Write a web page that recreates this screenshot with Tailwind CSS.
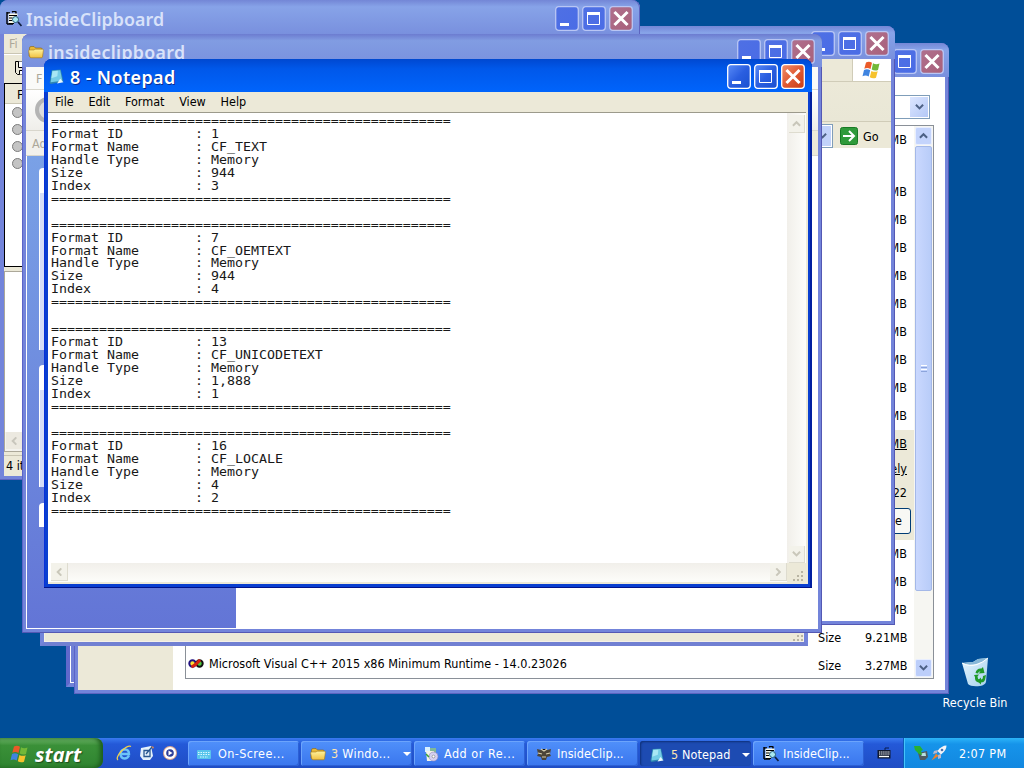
<!DOCTYPE html>
<html lang="en">
<head>
  <meta charset="UTF-8">
  <meta name="viewport" content="width=device-width, initial-scale=1.0">
  <title>8 - Notepad</title>
  <script src="https://cdn.jsdelivr.net/npm/@tailwindcss/browser@4"></script>
</head>
<body class="w-[1024px] h-[768px] overflow-hidden bg-[#004e98] text-black text-[12.5px] leading-[14px] font-['DejaVu_Sans_Condensed','Noto_Sans',sans-serif]">

  <!-- shared icons -->
  <svg class="absolute w-0 h-0">
    <defs>
      <linearGradient id="blueA" x1="0" y1="0" x2="1" y2="1"><stop offset="0" stop-color="#5a8cf8"/><stop offset=".5" stop-color="#2a5ee0"/><stop offset="1" stop-color="#1a50d0"/></linearGradient>
      <linearGradient id="redA" x1="0" y1="0" x2="1" y2="1"><stop offset="0" stop-color="#f0906c"/><stop offset=".5" stop-color="#e05a34"/><stop offset="1" stop-color="#c83c14"/></linearGradient>
      <linearGradient id="blueI" x1="0" y1="0" x2="1" y2="1"><stop offset="0" stop-color="#4f70e4"/><stop offset="1" stop-color="#4a6ce6"/></linearGradient>
      <linearGradient id="redI" x1="0" y1="0" x2="1" y2="1"><stop offset="0" stop-color="#b0708e"/><stop offset="1" stop-color="#a8607a"/></linearGradient>
      <linearGradient id="fold" x1="0" y1="0" x2="0" y2="1"><stop offset="0" stop-color="#fff3a0"/><stop offset="1" stop-color="#f0c040"/></linearGradient>
      <linearGradient id="bin" x1="0" y1="0" x2="1" y2="1"><stop offset="0" stop-color="#e8f6ff"/><stop offset="1" stop-color="#a4d0ec"/></linearGradient>
    </defs>
    <symbol id="min" viewBox="0 0 24 25">
      <rect x=".7" y=".7" width="22.6" height="23.6" rx="3" stroke-width="1.3"/>
      <rect x="5" y="17" width="9" height="3" fill="#fff" stroke="none"/>
    </symbol>
    <symbol id="max" viewBox="0 0 24 25">
      <rect x=".7" y=".7" width="22.6" height="23.6" rx="3" stroke-width="1.3"/>
      <path d="M5.500 7v11.500h12V7z" fill="none" stroke="#fff" stroke-width="1"/>
      <path d="M5 7.500h13" stroke="#fff" stroke-width="3"/>
    </symbol>
    <symbol id="close" viewBox="0 0 24 25">
      <rect x=".7" y=".7" width="22.6" height="23.6" rx="3" stroke-width="1.3"/>
      <path d="M6.500 7l11 11M17.500 7l-11 11" stroke="#fff" stroke-width="3" stroke-linecap="square"/>
    </symbol>
    <symbol id="folder" viewBox="0 0 16 16">
      <path d="M1.500 4q0-1.500 1.500-1.500h3l1.500 1.500H13q1 0 1 1V13H2.500L1 12z" fill="#e8b838" stroke="#8a6410" stroke-width=".6"/>
      <path d="M.6 7q0-1 1-1H6l1-.8h7.600q1 0 .8 1L14.500 13q-.2.8-1 .8H3q-1 0-1.200-1z" fill="url(#fold)" stroke="#a87c1c" stroke-width=".6"/>
    </symbol>
    <symbol id="notes" viewBox="0 0 16 16">
      <path d="M3.500 2l8.500-.5 2.500 11.500-12 2-1-1z" fill="#2f86b0"/>
      <path d="M4 2.500l7.500-.5 2 10-11 1.500z" fill="#74cce6"/>
      <path d="M4.300 3l5-.3-.5 5-5.600 2z" fill="#a8e6f4"/>
      <path d="M11.500 10l3 3.500-6 1z" fill="#e8f8ff"/>
    </symbol>
    <symbol id="clip" viewBox="0 0 16 16">
      <path d="M1 1v12M1 2h3M6 1l2-1 2 1v2M1 13h6" stroke="#000" stroke-width="1.400" fill="none"/>
      <path d="M2.500 2.500h9v3h-2L8 12H2.500z" fill="#f8f8e8"/>
      <path d="M3 4.500h8M3 7h3.500M3 9.500h3M3 12.500h5" stroke="#000" stroke-width="1"/>
      <circle cx="9.500" cy="8.500" r="3" fill="#a8e8f0" stroke="#245a78"/>
      <path d="M12 11l3.500 4" stroke="#102040" stroke-width="1.800"/>
    </symbol>
    <symbol id="flag" viewBox="0 0 20 20">
      <path d="M4 2.500q3-1.800 6 .2L8.500 9q-3-2-6.200-.3z" fill="#ea5a28"/>
      <path d="M11 3.300q3 1.800 6.500.3L16 10q-3 1.300-6.300-.4z" fill="#72b838"/>
      <path d="M2 10q3-1.700 6.200.2L6.700 16.500q-3-1.800-6.200-.3z" fill="#3f84e0"/>
      <path d="M9.400 10.900q3 1.700 6.300.3L14 17.700q-3 1.400-6.200-.4z" fill="#f6c22c"/>
    </symbol>
    <symbol id="down" viewBox="0 0 10 8"><path d="M1 1.500l4 4 4-4" fill="none" stroke-width="2.200"/></symbol>
    <symbol id="up" viewBox="0 0 10 8"><path d="M1 6l4-4 4 4" fill="none" stroke-width="2.200"/></symbol>
    <symbol id="grip" viewBox="0 0 12 12">
      <path d="M9 1h2v2h-2zM5 5h2v2h-2zM9 5h2v2h-2zM1 9h2v2h-2zM5 9h2v2h-2zM9 9h2v2h-2z" fill="#b8b4a2"/>
    </symbol>
  </svg>

  <!-- recycle bin -->
  <div class="absolute left-[935px] top-[656px] w-[80px] flex flex-col items-center text-white">
    <svg class="w-8 h-8" viewBox="0 0 32 32">
      <path d="M3 7l11-1 5-3 10-1-2 24q-1 3-6 4-9 1-12-2z" fill="url(#bin)"/>
      <path d="M3 7q6 3 14 1 7-2 12-6l-10 1-5 3z" fill="#88b8d8"/>
      <path d="M3 7q7 4 15 1.500 6-2 11-6.500" fill="none" stroke="#fff" stroke-width="1"/>
      <path d="M16.500 17q1-5 6-4.500l1.500-1.500 1.500 6-6 .5 2-2q-2-.5-2.500 2zM27 19l-1 5q-1 2.500-4 2.500v2l-4-3.500 4-3.500v2q2 0 2-3.500zM15 19l5-.5-1.500 2q0 2.500 2 3l-1 3q-4-1-3.500-5.500z" fill="#1f9a28"/>
    </svg>
    <span class="mt-2 whitespace-nowrap">Recycle Bin</span>
  </div>

  <!-- hidden window, only its lower left corner shows -->
  <div class="absolute left-[66px] top-[200px] w-[600px] h-[487px] bg-[#7080d6] border-4 border-[#7182d8] border-l-[#6068cc] shadow-[inset_0_0_0_1px_#fff]"></div>

  <!-- Add or Remove Programs -->
  <div class="absolute left-[74px] top-[43px] w-[875px] h-[651px] rounded-t-lg bg-[#7384da] border-b border-[#5c64c0] px-1 pb-[3px] flex flex-col shadow-[inset_-1px_0_#5458b4,inset_1px_0_#5c64c8]">
    <div class="h-[34px] shrink-0 -mx-1 rounded-t-lg bg-linear-to-b from-[#7386d6] via-[#87a3e8] via-20% to-[#7990de] flex justify-end items-center gap-[3px] pr-[5px] pt-[3px] stroke-[#b9c6f4]">
      <svg class="w-6 h-[25px] fill-[url(#blueI)]"><use href="#min"/></svg>
      <svg class="w-6 h-[25px] fill-[url(#blueI)]"><use href="#max"/></svg>
      <svg class="w-6 h-[25px] fill-[url(#redI)]"><use href="#close"/></svg>
    </div>
    <div class="flex-1 min-h-0 bg-white flex">
      <div class="w-[95px] bg-[#ece9d8]"></div>
      <div class="flex-1 pl-3 pr-[11px] flex flex-col">
        <div class="mt-[18px] mr-[4px] ml-auto w-[200px] h-[24px] border border-[#7f9db9] p-px flex justify-end">
          <div class="w-[18px] bg-linear-to-br from-[#dce6ff] to-[#b4c8f6] flex items-center justify-center"><svg class="w-[9px] h-2 stroke-[#4d6185]"><use href="#down"/></svg></div>
        </div>
        <div class="mt-[6px] h-[554px] border border-[#8a9098] flex">
          <div class="flex-1 flex flex-col text-right">
            <div class="h-[28px] pr-[7px] leading-[28px]">MB</div>
            <div class="h-6"></div>
            <div class="pr-[7px] leading-[28px]">
              <div>MB</div><div>MB</div><div>MB</div><div>MB</div><div>MB</div><div>MB</div><div>MB</div><div>MB</div><div>MB</div>
            </div>
            <div class="h-[110px] bg-[#ece9d8] pr-[7px]">
              <div class="leading-[28px] underline">MB</div>
              <div class="leading-[22px] underline">ely</div>
              <div class="leading-[25px]">22</div>
              <div class="mt-[3px] -mr-1 ml-auto w-[80px] h-[26px] bg-[#f8f8f4] border border-[#003c74] rounded-[3px] pr-2 leading-6">e</div>
            </div>
            <div class="pr-[7px] leading-[28px]">
              <div>MB</div><div>MB</div><div>MB</div>
              <div class="flex justify-end"><span class="w-[47px] text-left">Size</span><span class="w-[42px]">9.21MB</span></div>
              <div class="h-[24px] flex items-center"><svg class="ml-[2px] w-4 h-[14px]" viewBox="0 0 16 14"><circle cx="4.500" cy="6.500" r="3.200" fill="#ffe030" stroke="#201080" stroke-width="2"/><circle cx="11.500" cy="6.500" r="3.200" fill="#50c840" stroke="#101010" stroke-width="2"/><path d="M3.500 10Q8 8 12 3" fill="none" stroke="#d82010" stroke-width="3"/></svg><span class="ml-[5px] tracking-[.015px]">Microsoft Visual C++ 2015 x86 Minimum Runtime - 14.0.23026</span><span class="mt-[4px] ml-auto w-[47px] text-left">Size</span><span class="mt-[4px] w-[42px]">3.27MB</span></div>
            </div>
          </div>
          <div class="w-[19px] bg-[#f6f6f2] px-px py-px flex flex-col">
            <div class="h-[18px] rounded-[2px] bg-[#c4d4fc] border border-[#e8eeff] flex items-center justify-center"><svg class="w-[9px] h-2 stroke-[#4d6185]"><use href="#up"/></svg></div>
            <div class="mt-px h-[445px] rounded-[2px] bg-linear-to-r from-[#cad8fe] to-[#b8ccf8] border border-[#a4b8e8] flex flex-col items-center justify-center gap-px">
              <div class="w-[6px] h-px bg-white"></div><div class="w-[6px] h-px bg-[#8ca4dc]"></div><div class="w-[6px] h-px bg-white"></div><div class="w-[6px] h-px bg-[#8ca4dc]"></div>
            </div>
            <div class="mt-auto h-[18px] rounded-[2px] bg-[#bccefa] border border-[#e8eeff] flex items-center justify-center"><svg class="w-[9px] h-2 stroke-[#4d6185]"><use href="#down"/></svg></div>
          </div>
        </div>
      </div>
    </div>
  </div>

  <!-- browser window -->
  <div class="absolute left-[500px] top-[26px] w-[395px] h-[599px] rounded-t-lg bg-[#7384da] border-b border-[#5458b4] px-1 pb-[3px] flex flex-col shadow-[inset_-1px_0_#5458b4]">
    <div class="h-[33px] shrink-0 -mx-1 rounded-t-lg bg-linear-to-b from-[#7386d6] via-[#87a3e8] via-20% to-[#7990de] flex justify-end items-center gap-[3px] pr-[6px] pt-[2px] stroke-[#b9c6f4]">
      <svg class="w-6 h-[25px] fill-[url(#blueI)]"><use href="#min"/></svg>
      <svg class="w-6 h-[25px] fill-[url(#blueI)]"><use href="#max"/></svg>
      <svg class="w-6 h-[25px] fill-[url(#redI)]"><use href="#close"/></svg>
    </div>
    <div class="flex-1 bg-white">
      <div class="h-[23px] bg-[#ece9d8] border-b border-[#d0ccb8] flex justify-end">
        <div class="w-[39px] bg-white border-l border-[#d0ccb8] flex items-center justify-center"><svg class="w-5 h-5"><use href="#flag"/></svg></div>
      </div>
      <div class="h-[40px] bg-linear-to-b from-[#ece9d8] to-[#e9e7d6] border-b border-[#d0ccb8]"></div>
      <div class="h-[26px] bg-[#ece9d8] pl-[200px] pt-px flex items-center">
        <div class="w-[129px] h-6 border border-[#7f9db9] bg-white flex justify-end"><div class="w-[17px] m-px bg-[#c1d2fa] flex items-center justify-center"><svg class="w-[9px] h-2 stroke-[#4d6185]"><use href="#down"/></svg></div></div>
        <svg class="ml-[7px] w-[18px] h-[18px]" viewBox="0 0 18 18"><rect x=".5" y=".5" width="17" height="17" rx="2" fill="#2f9a3a" stroke="#187a24"/><path d="M3 9h11M9 4l5 5-5 5" fill="none" stroke="#fff" stroke-width="2"/></svg>
        <span class="ml-[5px] mt-[2px]">Go</span>
      </div>
    </div>
  </div>

  <!-- InsideClipboard -->
  <div class="absolute left-0 top-0 w-[640px] h-[480px] rounded-t-lg bg-[#7384da] border-b border-[#5c64c0] pl-1 pr-1 pb-[3px] flex flex-col">
    <div class="h-[34px] shrink-0 -mx-1 rounded-t-lg bg-linear-to-b from-[#7386d6] via-[#87a3e8] via-20% to-[#7990de] flex items-center gap-[3px] pl-[6px] pr-[7px] pt-[3px] stroke-[#b9c6f4] shadow-[inset_-1px_0_#5c64c0]">
      <svg class="w-4 h-4 stroke-none"><use href="#clip"/></svg>
      <span class="ml-[1px] mr-auto text-[17.8px] tracking-[.1px] leading-5 font-semibold text-[#d8e2fa] font-['Noto_Sans',sans-serif]">InsideClipboard</span>
      <svg class="w-6 h-[25px] fill-[url(#blueI)]"><use href="#min"/></svg>
      <svg class="w-6 h-[25px] fill-[url(#blueI)]"><use href="#max"/></svg>
      <svg class="w-6 h-[25px] fill-[url(#redI)]"><use href="#close"/></svg>
    </div>
    <div class="flex-1 bg-[#ece9d8] flex flex-col">
      <div class="h-5 border-b border-[#cac6b4] pl-[5px] leading-[20px] text-[#aca899]">Fi</div>
      <div class="h-[29px] border-t border-white pl-[10px] pt-[5px]">
        <svg class="w-4 h-4" viewBox="0 0 16 16"><path d="M1.500 1.500h13v13h-11l-2-2z" fill="#ece9d8" stroke="#000"/><path d="M4.500 1.500v6h7v-6M5.500 14.500v-4h6v4" fill="#fff" stroke="#000"/></svg>
      </div>
      <div class="h-[184px] border border-black bg-white">
        <div class="h-[20px] bg-[#ece9d8] border-b border-[#cac6b4] pl-3 pt-px leading-5">F</div>
        <div class="pl-[7px] pt-[3px] flex flex-col gap-[6px]">
          <div class="w-[11px] h-[11px] rounded-full bg-[#c4c4c4] border border-[#7c7c7c]"></div>
          <div class="w-[11px] h-[11px] rounded-full bg-[#c4c4c4] border border-[#7c7c7c]"></div>
          <div class="w-[11px] h-[11px] rounded-full bg-[#c4c4c4] border border-[#7c7c7c]"></div>
          <div class="w-[11px] h-[11px] rounded-full bg-[#c4c4c4] border border-[#7c7c7c]"></div>
        </div>
      </div>
      <div class="mt-1 h-[181px] border border-[#aca899] bg-white flex items-end">
        <div class="w-full h-[19px] bg-[#f4f3ee]"><div class="ml-px w-[17px] h-[17px] bg-[#ece9e0] text-[#c4c2b8] flex items-center justify-center"><svg class="w-[9px] h-2 -rotate-90 stroke-[#c8c6bc]"><use href="#up"/></svg></div></div>
      </div>
      <div class="mt-[3px] flex-1 border-t border-[#c8c4b2] pl-[2px] leading-[20px]">4 it</div>
    </div>
  </div>

  <!-- status bar of a covered window -->
  <div class="absolute left-[40px] top-[400px] w-[768px] h-[246px] bg-[#ece9d8] border-4 border-[#7384da] border-b-[#7180d2] shadow-[inset_0_0_0_1px_#f4f0e8] flex justify-end items-end">
    <svg class="w-3 h-3"><use href="#grip"/></svg>
  </div>

  <!-- insideclipboard folder -->
  <div class="absolute left-[22px] top-[34px] w-[800px] h-[599px] rounded-t-lg bg-[#7384da] border-b border-[#5458b4] px-1 pb-[3px] flex flex-col shadow-[inset_-1px_0_#5458b4,inset_1px_0_#5c64c8]">
    <div class="h-[33px] shrink-0 -mx-1 rounded-t-lg bg-linear-to-b from-[#6c7cd0] via-[#819ce2] via-20% to-[#7990de] flex items-center gap-[3px] pl-[6px] pr-[7px] pt-[2px] stroke-[#b9c6f4]">
      <svg class="w-4 h-4 stroke-none"><use href="#folder"/></svg>
      <span class="ml-[1px] mt-[1px] mr-auto text-[17.8px] tracking-[.3px] leading-5 font-semibold text-[#d8e2fa] font-['Noto_Sans',sans-serif]">insideclipboard</span>
      <svg class="w-6 h-[25px] fill-[url(#blueI)]"><use href="#min"/></svg>
      <svg class="w-6 h-[25px] fill-[url(#blueI)]"><use href="#max"/></svg>
      <svg class="w-6 h-[25px] fill-[url(#redI)]"><use href="#close"/></svg>
    </div>
    <div class="flex-1 min-h-0 bg-white flex flex-col">
      <div class="h-[23px] bg-[#fafaf8] border-b border-[#d8d6cc] pl-[10px] leading-[23px] text-[#aca899]">F</div>
      <div class="h-[41px] bg-linear-to-b from-white to-[#efeeea] border-b border-[#d8d6cc] pl-[9px] pt-[7px]"><div class="w-[26px] h-[26px] rounded-full bg-[#dcdcdc] border-4 border-[#b4b4b4]"></div></div>
      <div class="h-[25px] bg-linear-to-r from-[#f2f1ec] to-[#ece9d8] border-b border-[#d8d6cc] pl-[6px] leading-[25px] text-[#aca899]">Ad</div>
      <div class="flex-1 flex pl-px pb-px">
        <div class="w-[209px] bg-linear-to-b from-[#7aa1e6] to-[#6375d6] pl-3 pt-3">
          <div class="h-[25px] rounded-tl bg-white"></div>
          <div class="h-[157px] bg-[#d6dff7] border-l border-white"></div>
          <div class="mt-[15px] h-[25px] rounded-tl bg-white"></div>
          <div class="h-[97px] bg-[#d6dff7] border-l border-white"></div>
          <div class="mt-[16px] h-[24px] rounded-tl bg-white"></div>
        </div>
      </div>
    </div>
  </div>

  <!-- Notepad -->
  <div class="absolute left-[44px] top-[59px] w-[768px] h-[529px] rounded-t-lg bg-[#0a3fd0] border-b border-[#00138c] px-1 pb-[3px] flex flex-col shadow-[inset_-2px_0_#001ea0,inset_1px_0_#0831d9]">
    <div class="h-[33px] shrink-0 -mx-1 rounded-t-lg bg-linear-to-b from-[#0048d0] via-[#0058ea] via-30% to-[#0064fc] flex items-center gap-[3px] pl-[4px] pr-[7px] pt-[2px] stroke-white">
      <svg class="w-[17px] h-[17px] stroke-none"><use href="#notes"/></svg>
      <span class="ml-[2px] mt-[1px] mr-auto text-[18px] tracking-[.35px] leading-5 font-semibold text-white font-['Noto_Sans',sans-serif] [text-shadow:1px_1px_#0a2c90]">8 - Notepad</span>
      <svg class="w-6 h-[25px] fill-[url(#blueA)]"><use href="#min"/></svg>
      <svg class="w-6 h-[25px] fill-[url(#blueA)]"><use href="#max"/></svg>
      <svg class="w-6 h-[25px] fill-[url(#redA)]"><use href="#close"/></svg>
    </div>
    <div class="flex-1 min-h-0 bg-[#ece9d8] flex flex-col">
      <div class="h-5 pl-[7px] leading-[20px] flex gap-[14.7px]">
        <span>File</span><span>Edit</span><span>Format</span><span>View</span><span>Help</span>
      </div>
      <div class="flex-1 min-h-0 mb-[2px] mr-[2px] border-t border-[#9c9a8c] bg-white flex">
        <div class="flex-1 min-w-0 flex flex-col">
          <div class="flex-1 min-h-0 overflow-hidden">
<pre class="ml-[3px] mt-[2px] origin-top-left scale-y-[.87] text-[13.29px] leading-[14.96px] text-[#181818] font-['DejaVu_Sans_Mono',monospace]">==================================================
Format ID         : 1
Format Name       : CF_TEXT
Handle Type       : Memory
Size              : 944
Index             : 3
==================================================

==================================================
Format ID         : 7
Format Name       : CF_OEMTEXT
Handle Type       : Memory
Size              : 944
Index             : 4
==================================================

==================================================
Format ID         : 13
Format Name       : CF_UNICODETEXT
Handle Type       : Memory
Size              : 1,888
Index             : 1
==================================================

==================================================
Format ID         : 16
Format Name       : CF_LOCALE
Handle Type       : Memory
Size              : 4
Index             : 2
==================================================</pre>
          </div>
          <div class="h-[19px] ml-[3px] bg-linear-to-b from-[#f1efea] to-[#fdfdfa] flex justify-between">
            <div class="w-[17px] h-[18px] bg-[#f3f2ea] border-r border-b border-[#dedccf] flex items-center justify-center"><svg class="w-[9px] h-2 -rotate-90 stroke-[#c9c7ba]"><use href="#up"/></svg></div>
            <div class="w-[17px] h-[18px] bg-[#f3f2ea] border-r border-b border-[#dedccf] flex items-center justify-center"><svg class="w-[9px] h-2 -rotate-90 stroke-[#c9c7ba]"><use href="#down"/></svg></div>
          </div>
        </div>
        <div class="w-[19px] bg-linear-to-r from-[#f1efea] to-[#fdfdfa] flex flex-col">
          <div class="mt-[2px] ml-[2px] w-4 h-[18px] bg-[#f3f2ea] border-r border-b border-[#dedccf] flex items-center justify-center"><svg class="w-[9px] h-2 stroke-[#c9c7ba]"><use href="#up"/></svg></div>
          <div class="mt-auto ml-[2px] w-4 h-[17px] bg-[#f3f2ea] border-r border-b border-[#dedccf] flex items-center justify-center"><svg class="w-[9px] h-2 stroke-[#c9c7ba]"><use href="#down"/></svg></div>
          <div class="h-[19px] bg-[#ece9d8] flex items-end justify-end"><svg class="w-3 h-3 mr-[2px]"><use href="#grip"/></svg></div>
        </div>
      </div>
    </div>
  </div>

  <!-- taskbar -->
  <div class="absolute left-0 top-[738px] w-[1024px] h-[30px] bg-linear-to-b from-[#3a7af0] via-[#2459d8] via-20% to-[#1f4dc4] flex text-white">
    <div class="w-[103px] rounded-r-lg bg-linear-to-b from-[#6cb468] via-[#3a9038] via-25% to-[#2f8430] shadow-[inset_-3px_0_4px_#1c5c1c] flex items-center pl-[10px] pt-[2px]">
      <svg class="w-5 h-5"><use href="#flag"/></svg>
      <span class="ml-[5px] mt-[2px] text-[20px] leading-6 font-bold italic font-['Open_Sans','Noto_Sans',sans-serif] [text-shadow:1px_1px_1px_#1c4c1c]">start</span>
    </div>
    <div class="w-[85px] pl-[13px] flex items-center gap-[7px]">
      <svg class="w-4 h-4" viewBox="0 0 16 16"><path d="M13 10.500q-1.500 3-4.500 3-4-.3-4-4.500t4.300-4.600Q13 4.500 13 9H5" fill="none" stroke="#6cc4f8" stroke-width="2.400"/><path d="M2 15Q-.5 13 5 6.500 12 0 15 1.500" fill="none" stroke="#f0d050" stroke-width="1.300"/></svg>
      <svg class="w-4 h-4" viewBox="0 0 16 16"><path d="M2 3l10-2 2 10-3 4H4L1 11z" fill="#e4f2fc"/><path d="M5 5.500h6v6H5zM7 9l6-7" fill="none" stroke="#285890" stroke-width="1.300"/><path d="M12 1l3 1-1 2z" fill="#e08850"/></svg>
      <svg class="w-4 h-4" viewBox="0 0 16 16"><circle cx="8" cy="8" r="7" fill="#e0a890"/><circle cx="8" cy="8" r="6" fill="#fff"/><circle cx="8" cy="8" r="3.800" fill="#2c3c98"/><path d="M6.500 5.500l4 2.500-4 2.500z" fill="#fff"/></svg>
    </div>
    <div class="flex gap-[2px] pt-[3px] pb-[2px]">
      <div class="w-[111px] rounded-[3px] bg-linear-to-b from-[#5090fa] to-[#3a76ee] shadow-[inset_1px_1px_#6ca4fc,inset_-1px_-1px_#2c60d4] flex items-center pl-2 whitespace-nowrap">
        <svg class="w-4 h-4" viewBox="0 0 16 16"><rect x="1" y="4" width="14" height="9" rx="1" fill="#58c4ec"/><path d="M2 6.500h12M2 8.500h12M4 11h8" stroke="#d8f8ff" stroke-dasharray="1.500 1"/></svg>
        <span class="ml-[6px] tracking-[.4px]">On-Scree...</span>
      </div>
      <div class="w-[111px] rounded-[3px] bg-linear-to-b from-[#5090fa] to-[#3a76ee] shadow-[inset_1px_1px_#6ca4fc,inset_-1px_-1px_#2c60d4] flex items-center pl-[9px] pr-[1px] whitespace-nowrap">
        <svg class="w-4 h-4"><use href="#folder"/></svg>
        <span class="ml-[5px] tracking-[.3px]"><span class="text-[#ffe6b0]">3</span> Windo...</span>
        <svg class="ml-auto w-2 h-1" viewBox="0 0 8 4"><path d="M0 0h8L4 4z" fill="#fff"/></svg>
      </div>
      <div class="w-[111px] rounded-[3px] bg-linear-to-b from-[#5090fa] to-[#3a76ee] shadow-[inset_1px_1px_#6ca4fc,inset_-1px_-1px_#2c60d4] flex items-center pl-[9px] whitespace-nowrap">
        <svg class="w-4 h-4" viewBox="0 0 16 16"><path d="M2 1h5v5H2z" fill="#d8f0ff"/><path d="M7 2h6v7H7z" fill="#80b898"/><path d="M3 5h8l1 10H4z" fill="#f4f4e8"/><circle cx="10.500" cy="10.500" r="4.500" fill="#d4d0f0" stroke="#9088b8" stroke-width=".6"/><circle cx="10.500" cy="10.500" r="1.400" fill="#fff" stroke="#666" stroke-width=".5"/><path d="M3 8l3 3" stroke="#38a038" stroke-width="1.500"/></svg>
        <span class="ml-[5px] tracking-[.5px]">Add or Re...</span>
      </div>
      <div class="w-[111px] rounded-[3px] bg-linear-to-b from-[#5090fa] to-[#3a76ee] shadow-[inset_1px_1px_#6ca4fc,inset_-1px_-1px_#2c60d4] flex items-center pl-[9px] whitespace-nowrap">
        <svg class="w-4 h-4" viewBox="0 0 16 16"><path d="M1 3l4 1 3-1 3 1 4-1-1 5 1 2-4 1-1 3H6l-1-3-4-1 1-2z" fill="#4c4438"/><path d="M2 7l4 1M14 7l-4 1M6 11l4 0M5 3l3 2 3-2" stroke="#d8d0b0" stroke-width="1.200"/></svg>
        <span class="ml-[5px] tracking-[.1px]">InsideClip...</span>
      </div>
      <div class="w-[111px] rounded-[3px] bg-[#1d4bb2] shadow-[inset_1px_1px_2px_#0e3078] flex items-center pl-[9px] pr-[1px] pt-[2px] whitespace-nowrap">
        <svg class="w-4 h-4"><use href="#notes"/></svg>
        <span class="ml-[6px] tracking-[.1px]"><span class="text-[#ffe6b0]">5</span> Notepad</span>
        <svg class="ml-auto w-2 h-1" viewBox="0 0 8 4"><path d="M0 0h8L4 4z" fill="#fff"/></svg>
      </div>
      <div class="w-[111px] rounded-[3px] bg-linear-to-b from-[#5090fa] to-[#3a76ee] shadow-[inset_1px_1px_#6ca4fc,inset_-1px_-1px_#2c60d4] flex items-center pl-[10px] whitespace-nowrap">
        <svg class="w-4 h-4"><use href="#clip"/></svg>
        <span class="ml-[4px] tracking-[.1px]">InsideClip...</span>
      </div>
    </div>
    <div class="flex-1 flex items-center justify-center">
      <svg class="w-[14px] h-3" viewBox="0 0 14 12"><path d="M8 3V1h4" fill="none" stroke="#081c50"/><rect x=".5" y="3" width="13" height="8.500" fill="#101830"/><path d="M2 5h11M2 7h11" stroke="#fff" stroke-width="1.200" stroke-dasharray="1.400 .7"/><path d="M2 9.500h10" stroke="#fff" stroke-width="1.400"/></svg>
    </div>
    <div class="w-[121px] bg-linear-to-b from-[#2cb4f8] via-[#1694ea] via-20% to-[#1288e0] border-l border-[#0c5cb8] shadow-[inset_1px_0_#44c4fc] flex items-center pl-[9px]">
      <svg class="w-4 h-4" viewBox="0 0 16 16"><path d="M5 8l9-2 1 6-3 3H7z" fill="#505a60"/><path d="M8 8.500l4.500-1 .5 3.500H8.500z" fill="#b8e0e0"/><path d="M1 1l6 0 3 4-2 1 1 4-3-1-4-4z" fill="#28b030"/></svg>
      <svg class="ml-[2px] w-4 h-4" viewBox="0 0 16 16"><path d="M15.500 0.500q-5 0-9 5.500l3.500 3.500q5.500-4 5.500-9z" fill="#f4f4f8"/><path d="M7 5L3 6 2 9l4-1zM10 9l0 4-3 1 0-4z" fill="#b8b8d0"/><path d="M5 8.500l2.500 2.500-7 4.500z" fill="#f08028"/><circle cx="11" cy="5" r="1.300" fill="#5070a8"/></svg>
      <span class="ml-[12px] mt-px tracking-[.3px]">2:07 PM</span>
    </div>
  </div>

</body>
</html>
